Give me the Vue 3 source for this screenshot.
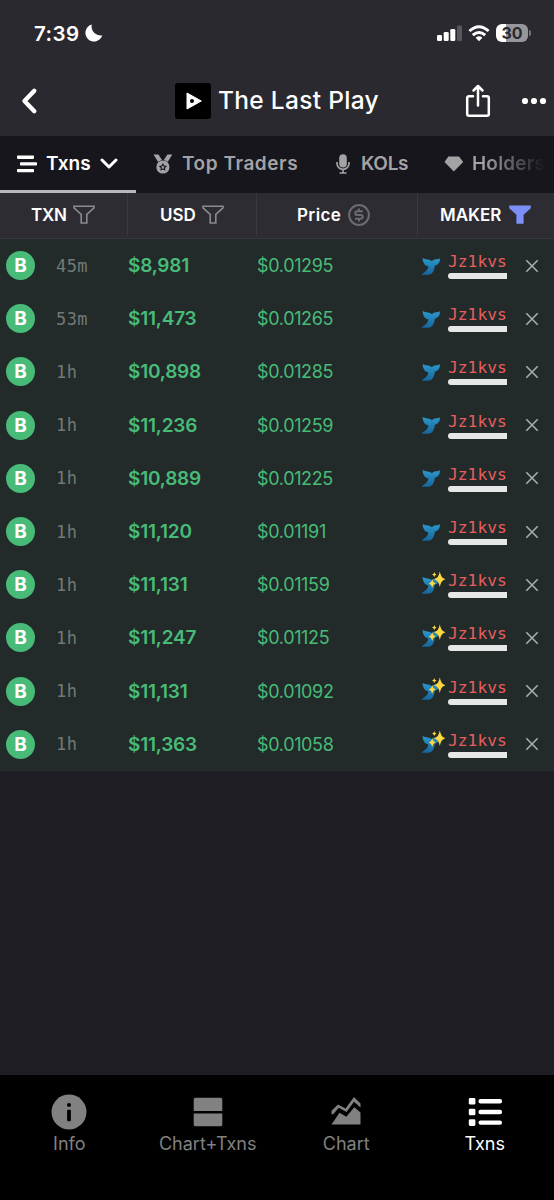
<template>
  <div class="screen">
    <header class="top">
      <div class="status">
        <span class="time">7:39</span>
        <svg class="moon" width="18" height="18" viewBox="0 0 18 18">
          <path d="M6.8 0.6A8.6 8.6 0 1 0 17.3 11.2A8.9 8.9 0 0 1 6.8 0.6Z" fill="#fff" />
        </svg>
        <svg class="signal" width="26" height="17" viewBox="0 0 26 17">
          <rect x="0" y="10" width="5" height="6" rx="1.3" fill="#fff" />
          <rect x="6.7" y="7" width="5" height="9" rx="1.3" fill="#fff" />
          <rect x="13.3" y="4" width="5" height="12" rx="1.3" fill="#fff" />
          <rect x="20" y="0.5" width="5" height="15.5" rx="1.3" fill="#58575d" />
        </svg>
        <svg class="wifi" width="22" height="17" viewBox="0 0 22 17" fill="none" stroke="#fff" stroke-width="2.9">
          <path d="M1.4 6Q11-2.6 20.6 6" />
          <path d="M4.8 10.2Q11 4.6 17.2 10.2" />
          <path d="M7.6 12.7Q11 9.8 14.4 12.7L11 16.2Z" fill="#fff" stroke="none" />
        </svg>
        <div class="battery"><span>30</span></div>
        <i class="battery-tip"></i>
      </div>
      <div class="titlebar">
        <svg class="back" width="18" height="28" viewBox="0 0 18 28" fill="none" stroke="#fff" stroke-width="4.4" stroke-linecap="round" stroke-linejoin="round">
          <path d="M13.3 3.8L3.5 14L13.3 24.2" />
        </svg>
        <svg class="logo" width="36" height="36" viewBox="0 0 36 36">
          <rect width="36" height="36" rx="3" />
          <path d="M12 10L26.3 18L12 26Z" fill="#fff" stroke="#fff" stroke-linejoin="round" />
          <circle cx="17" cy="18" r="2" />
        </svg>
        <h1>The Last Play</h1>
        <svg class="share" width="26" height="34" viewBox="0 0 26 34" fill="none" stroke="#fff" stroke-width="2.5" stroke-linecap="round" stroke-linejoin="round">
          <path d="M8 12.2H4Q2.2 12.2 2.2 14V30Q2.2 31.8 4 31.8H22Q23.8 31.8 23.8 30V14Q23.8 12.2 22 12.2H18M13 21.5V2.5M8.5 6.5L13 2L17.5 6.5" />
        </svg>
        <svg class="more" width="26" height="8" viewBox="0 0 26 8" fill="#fff">
          <circle cx="4" cy="4" r="3.1" /><circle cx="13" cy="4" r="3.1" /><circle cx="22" cy="4" r="3.1" />
        </svg>
      </div>
    </header>

    <nav class="tabs">
      <div class="tab active">
        <svg width="20" height="18" viewBox="0 0 20 18" fill="#fff">
          <rect x="0" y="0.5" width="17" height="3.4" rx="0.8" />
          <rect x="3" y="7.2" width="17" height="3.4" rx="0.8" />
          <rect x="0" y="13.9" width="17" height="3.4" rx="0.8" />
        </svg>
        <span class="t-txns">Txns</span>
        <svg class="chev" width="18" height="12" viewBox="0 0 18 12" fill="none" stroke="#fff" stroke-width="3" stroke-linecap="round" stroke-linejoin="round">
          <path d="M2 2L9 9L16 2" />
        </svg>
      </div>
      <div class="tab traders">
        <svg width="20" height="20" viewBox="0 0 20 20" fill="#a3a3a6">
          <path d="M0.5 0.5H5.4L9 6.1L5 7.8ZM19.3 0.5H14.4L10.8 6.1L14.8 7.8Z" />
          <circle cx="9.9" cy="13" r="6.6" />
          <path d="M9.9 8.9L11.2 11.5L14.1 11.9L12 13.9L12.5 16.8L9.9 15.4L7.3 16.8L7.8 13.9L5.7 11.9L8.6 11.5Z" fill="#17161c" />
          <path d="M9.9 11.2L10.5 12.5L11.8 12.6L10.9 13.6L11.1 14.9L9.9 14.3L8.7 14.9L8.9 13.6L8 12.6L9.3 12.5Z" />
        </svg>
        <span>Top Traders</span>
      </div>
      <div class="tab kols">
        <svg width="14" height="20" viewBox="0 0 14 20">
          <rect x="3.2" y="0.3" width="7.6" height="13.2" rx="3.8" fill="#a3a3a6" />
          <path d="M1 8V9.6A6 5.8 0 0 0 13 9.6V8M7 15.5V19M3.5 19H10.5" fill="none" stroke="#a3a3a6" stroke-width="1.7" />
        </svg>
        <span>KOLs</span>
      </div>
      <div class="tab holders">
        <svg width="20" height="16" viewBox="0 0 20 16">
          <path d="M4.4 0.5H15L19.2 6L9.8 15.5L0.5 6Z" fill="#a3a3a6" />
        </svg>
        <span>Holders</span>
      </div>
    </nav>

    <section class="head">
      <div v-for="c in columns" :key="c.label" class="th" :class="c.key">
        <span>{{ c.label }}</span>
        <svg v-if="c.key === 'price'" width="22" height="22" viewBox="0 0 22 22" fill="none" stroke="#6c6b70" stroke-width="2">
          <circle cx="11" cy="11" r="9.9" />
          <path d="M14.8 7.3H9.2A1.85 1.85 0 0 0 9.2 11H12.8A1.85 1.85 0 0 1 12.8 14.7H7M11 4.5V7.3M11 14.7V17.5" />
        </svg>
        <svg v-else width="22" height="20" viewBox="0 0 22 20" class="funnel" :class="{ on: c.key === 'maker' }">
          <path d="M1 1.3H21V2.8L13.8 9.4V18H8.2V9.4L1 2.8Z" />
        </svg>
      </div>
    </section>

    <main>
      <div v-for="(t, i) in txns" :key="i" class="row">
        <div class="side">B</div>
        <div class="age">{{ t.age }}</div>
        <div class="usd">{{ t.usd }}</div>
        <div class="amount">{{ t.price }}</div>
        <svg class="whale" width="27" height="28" viewBox="0 0 27 28">
          <defs>
            <linearGradient id="tail" x1="0" y1="0" x2="0" y2="1">
              <stop offset="0" stop-color="#2b98cc" />
              <stop offset="1" stop-color="#17659b" />
            </linearGradient>
          </defs>
          <path d="M2.6 6Q5 7.2 7.6 7.4Q10.4 7.7 11.8 9.2Q13.6 7.4 16 7.2Q18.6 7 20 6.2Q20.2 10.2 17.8 12.2Q16.2 13.4 14.8 13.8Q14.6 17.6 13 20Q11.4 22.8 8.6 22.8H1.6Q2 21.6 4.2 20.4Q7.8 18.4 8.4 14.5Q6.2 14.3 4.4 12.2Q2.4 9.8 2.6 6Z" fill="url(#tail)" />
          <g v-if="t.fresh" fill="#ffd83d">
            <path d="M19.8 0.3Q20.7 7 25.5 8.2Q20.7 9.4 19.8 16.1Q18.9 9.4 14.1 8.2Q18.9 7 19.8 0.3Z" />
            <path d="M12.2 8.3Q12.8 11.7 15.6 12.5Q12.8 13.3 12.2 16.7Q11.6 13.3 8.8 12.5Q11.6 11.7 12.2 8.3Z" />
            <path d="M14.3 0.9Q14.6 2.9 16.5 3.4Q14.6 3.9 14.3 5.9Q14 3.9 12.1 3.4Q14 2.9 14.3 0.9Z" />
          </g>
        </svg>
        <div class="wallet">
          <span>Jz1kvs</span>
          <i></i>
        </div>
        <svg class="close" width="14" height="14" viewBox="0 0 14 14" stroke="#a8acaa" stroke-width="1.6">
          <path d="M1.3 1.3L12.7 12.7M12.7 1.3L1.3 12.7" />
        </svg>
      </div>
    </main>

    <footer class="bottom">
      <div class="item">
        <svg width="36" height="36" viewBox="0 0 36 36">
          <circle cx="18" cy="18" r="17.5" fill="#818181" />
          <circle cx="18" cy="11" r="2" />
          <rect x="16.1" y="15.7" width="3.8" height="11.5" rx="0.8" />
        </svg>
        <span>Info</span>
      </div>
      <div class="item">
        <svg width="36" height="36" viewBox="0 0 36 36" fill="#818181">
          <path d="M3.7 17V5.6Q3.7 3.7 5.6 3.7H30.4Q32.3 3.7 32.3 5.6V17ZM3.7 19.4H32.3V30.4Q32.3 32.3 30.4 32.3H5.6Q3.7 32.3 3.7 30.4Z" />
        </svg>
        <span>Chart+Txns</span>
      </div>
      <div class="item">
        <svg width="36" height="36" viewBox="0 0 36 36" fill="#818181">
          <path d="M3.5 30.5L11.5 18.8L18.3 22.8L26.3 13.2L32.5 18.5V30.5Z" />
          <path d="M3.5 20.3V16.8L10 10.4L17.5 14.4L26 3L32.5 9.4V13.5L26 7.8L18.5 18L10.8 13.8L5.2 20.3Z" />
        </svg>
        <span>Chart</span>
      </div>
      <div class="item current">
        <svg width="36" height="36" viewBox="0 0 36 36" fill="#fff">
          <g v-for="y in [4, 14.7, 25.3]" :key="y">
            <rect x="1.8" :y="y" width="6.6" height="6.6" rx="1.4" />
            <rect x="11.5" :y="y + 1.1" width="23.5" height="4.4" rx="2" />
          </g>
        </svg>
        <span>Txns</span>
      </div>
    </footer>
  </div>
</template>

<script setup>
const columns = [
  { key: 'txn', label: 'TXN' },
  { key: 'usd-head', label: 'USD' },
  { key: 'price', label: 'Price' },
  { key: 'maker', label: 'MAKER' }
];

const txns = [
  { age: '45m', usd: '$8,981', price: '$0.01295' },
  { age: '53m', usd: '$11,473', price: '$0.01265' },
  { age: '1h', usd: '$10,898', price: '$0.01285' },
  { age: '1h', usd: '$11,236', price: '$0.01259' },
  { age: '1h', usd: '$10,889', price: '$0.01225' },
  { age: '1h', usd: '$11,120', price: '$0.01191' },
  { age: '1h', usd: '$11,131', price: '$0.01159', fresh: true },
  { age: '1h', usd: '$11,247', price: '$0.01125', fresh: true },
  { age: '1h', usd: '$11,131', price: '$0.01092', fresh: true },
  { age: '1h', usd: '$11,363', price: '$0.01058', fresh: true }
];
</script>

<style>
body {
  background: #1e1d23;
}
</style>

<style scoped>
.screen {
  display: flex;
  flex-direction: column;
  width: 554px;
  height: 1200px;
  overflow: hidden;
  background: #1e1d23;
  color: #fff;
  font-family: Inter, sans-serif;
  white-space: nowrap;
}

svg {
  display: block;
  flex: none;
}

.top {
  height: 136px;
  background: #2a292f;
}

.status {
  display: flex;
  align-items: center;
  height: 66px;
  padding-left: 34px;
}

.time {
  width: 51px;
  font-size: 20.5px;
  font-weight: 600;
  letter-spacing: 0.4px;
}

.signal {
  margin-left: 334px;
}

.wifi {
  margin-left: 5px;
}

.battery {
  width: 32px;
  height: 18px;
  margin-left: 6px;
  border-radius: 6px;
  background: linear-gradient(90deg, #fff 30%, #97969b 30%);
  color: #2a292f;
  font-size: 16px;
  font-weight: 700;
  line-height: 18px;
  text-align: center;
}

.battery-tip {
  width: 2px;
  height: 6px;
  margin-left: 1px;
  border-radius: 0 2px 2px 0;
  background: #77767b;
}

.titlebar {
  display: flex;
  align-items: center;
  height: 69px;
  padding-left: 20px;
}

.back {
  margin-left: 1px;
}

.logo {
  margin-left: 136px;
}

h1 {
  width: 247px;
  margin: 0 0 2px 7px;
  font-size: 24.5px;
  font-weight: 500;
  letter-spacing: 0.3px;
}

.more {
  margin-left: 30px;
}

.tabs {
  display: flex;
  height: 57px;
  background: #17161c;
}

.tab {
  display: flex;
  flex: none;
  align-items: center;
  box-sizing: border-box;
  height: 57px;
  padding-bottom: 2px;
  color: #a3a3a6;
  font-size: 19px;
  font-weight: 600;
}

.tab.active {
  width: 136px;
  padding: 1px 0 0 17px;
  border-bottom: 3px solid #b9b9bc;
  color: #fff;
}

.t-txns {
  width: 54px;
  margin-left: 9px;
}

.traders {
  width: 200px;
  padding-left: 17px;
}

.traders span {
  margin-left: 9px;
  letter-spacing: 0.55px;
}

.kols {
  width: 108px;
}

.kols span {
  margin-left: 11px;
  letter-spacing: -0.3px;
}

.holders span {
  margin-left: 8px;
  background: linear-gradient(90deg, #a3a3a6 15%, #17161c 100%);
  background-clip: text;
  color: transparent;
  letter-spacing: 0.2px;
}

.head {
  display: flex;
  box-sizing: border-box;
  height: 46px;
  border-bottom: 1px solid #38373c;
  background: #2d2c32;
}

.th {
  display: flex;
  align-items: center;
  justify-content: space-between;
  box-sizing: border-box;
  height: 43px;
  border-right: 1px solid #3a393f;
  font-size: 17px;
  font-weight: 600;
}

.txn {
  width: 128px;
  padding: 0 32px 0 31px;
  letter-spacing: -0.2px;
}

.usd-head {
  width: 129px;
  padding: 0 32px;
}

.price {
  width: 161px;
  padding: 0 47px 0 40px;
  letter-spacing: 0.4px;
}

.maker {
  width: 136px;
  padding: 0 23px 0 22px;
}

.th.maker {
  border-right: 0;
}

.funnel path {
  fill: none;
  stroke: #8b8a8f;
  stroke-width: 1.6;
}

.funnel.on path {
  fill: #7c8ff8;
  stroke: #7c8ff8;
}

.row {
  display: flex;
  align-items: center;
  height: 53.2px;
  padding-left: 6px;
  background: #222b2a;
}

.side {
  width: 29px;
  height: 29px;
  border-radius: 50%;
  background: #48bb78;
  font-size: 19px;
  font-weight: 700;
  line-height: 29px;
  text-align: center;
}

.age {
  width: 72px;
  margin-left: 21px;
  color: #727977;
  font-family: "DejaVu Sans Mono", monospace;
  font-size: 17px;
  letter-spacing: 0.4px;
}

.usd {
  width: 129px;
  color: #48bb78;
  font-size: 19px;
  font-weight: 600;
  letter-spacing: -0.2px;
}

.amount {
  width: 163px;
  color: #48bb78;
  font-size: 18px;
  letter-spacing: -0.35px;
}

.wallet {
  width: 59px;
  margin-left: 1px;
  color: #e85d5c;
  font-family: "DejaVu Sans Mono", monospace;
  font-size: 16.3px;
  line-height: 20px;
}

.wallet i {
  display: block;
  height: 6px;
  margin-top: 1px;
  border-radius: 3px 0 0 3px;
  background: #e6e8e8;
}

.close {
  margin-left: 18px;
}

.bottom {
  display: flex;
  height: 125px;
  margin-top: auto;
  background: #000;
}

.item {
  display: flex;
  flex: 1;
  flex-direction: column;
  align-items: center;
  padding-top: 19px;
  color: #818181;
  font-size: 18px;
  line-height: 28px;
}

.item.current {
  color: #fff;
}
</style>
